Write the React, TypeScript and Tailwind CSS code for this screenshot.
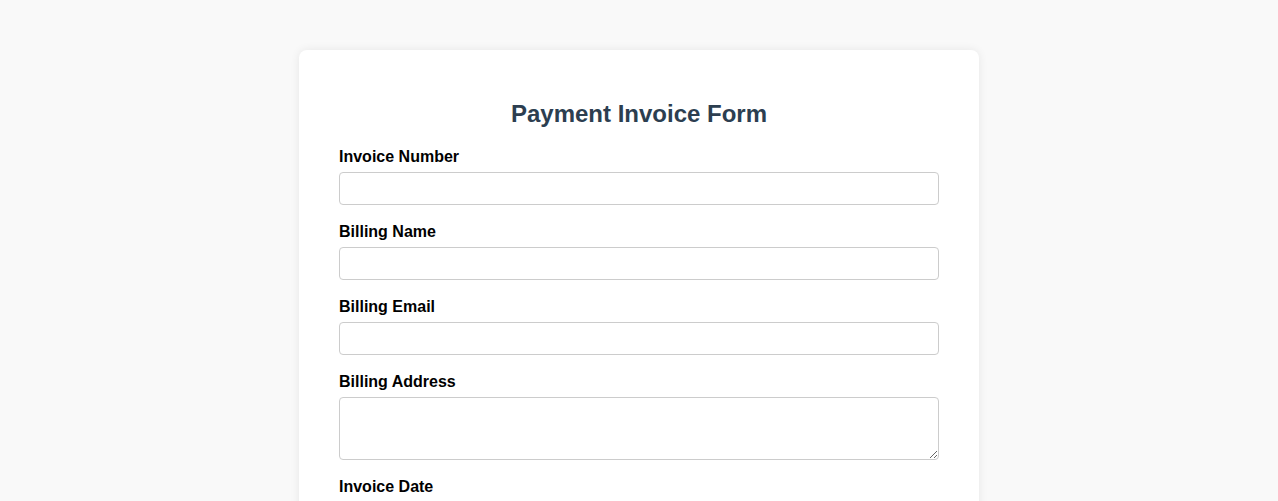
export default function App() {
  const fields = [
    { label: "Invoice Number", type: "text" },
    { label: "Billing Name", type: "text" },
    { label: "Billing Email", type: "email" },
  ]

  return (
    <div className="min-h-screen bg-[#f9f9f9] pt-[50px] pb-10 font-['Liberation_Sans',Arial,sans-serif]">
      <div className="mx-auto w-[680px] rounded-lg bg-white px-10 pt-[50px] pb-10 shadow-[0_0_10px_rgba(0,0,0,0.08)]">
        <h2 className="mb-[20px] text-center text-[24px] leading-[28px] font-bold text-[#2c3e50]">Payment Invoice Form</h2>
        <form>
          {fields.map((f) => (
            <div key={f.label} className="mb-[18px]">
              <label className="mb-[6px] block text-[16px] leading-[18px] font-bold text-black">{f.label}</label>
              <input type={f.type} className="block h-[33px] w-full rounded border border-[#ccc] px-2 text-[14px]" />
            </div>
          ))}
          <div className="mb-[18px]">
            <label className="mb-[6px] block text-[16px] leading-[18px] font-bold text-black">Billing Address</label>
            <textarea className="block h-[63px] w-full rounded border border-[#ccc] px-2 py-2 text-[14px]" />
          </div>
          <div className="mb-[18px]">
            <label className="mb-[6px] block text-[16px] leading-[18px] font-bold text-black">Invoice Date</label>
            <input type="date" className="block h-[33px] w-full rounded border border-[#ccc] px-2 text-[14px]" />
          </div>
          <div className="mb-[18px]">
            <label className="mb-[6px] block text-[16px] leading-[18px] font-bold text-black">Amount</label>
            <input type="number" className="block h-[33px] w-full rounded border border-[#ccc] px-2 text-[14px]" />
          </div>
          <button type="submit" className="w-full rounded bg-[#2c3e50] py-2 text-[16px] font-bold text-white">Submit Invoice</button>
        </form>
      </div>
    </div>
  )
}
